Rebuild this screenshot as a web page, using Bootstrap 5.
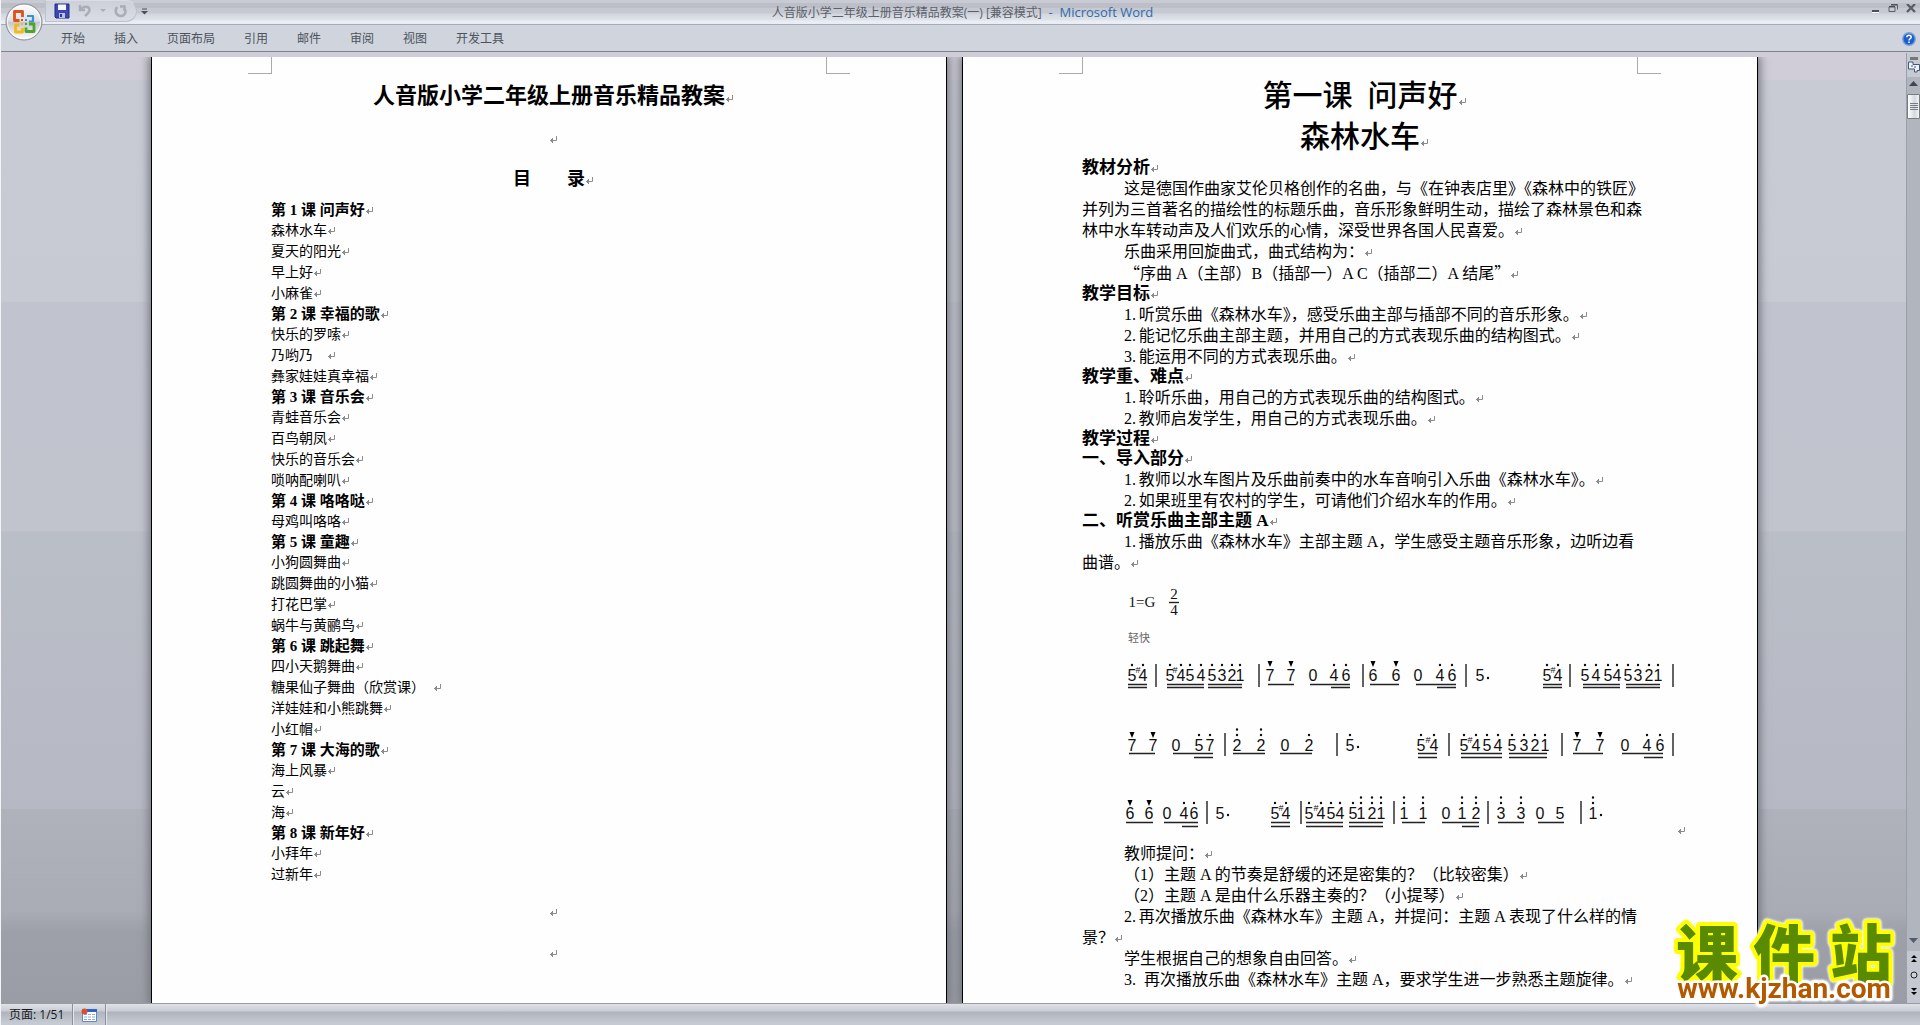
<!DOCTYPE html>
<html lang="zh-CN">
<head>
<meta charset="utf-8">
<meta name="viewport" content="width=device-width, initial-scale=1">
<title>人音版小学二年级上册音乐精品教案(一) [兼容模式] - Microsoft Word</title>
<link href="https://cdn.jsdelivr.net/npm/bootstrap@5.3.0/dist/css/bootstrap.min.css" rel="stylesheet">
<style>
  :root { --ui: "Open Sans", "Noto Sans CJK SC", sans-serif; --doc: "Liberation Serif", "Noto Sans CJK SC", serif; }
  body { font-family: var(--ui); font-size: 12px; line-height: 16px; color: #4c535c; border-left: 1px solid #f4f4f6; background: #d0cdd8; overflow-x: hidden; }
  button { border: 0; padding: 0; background: none; color: inherit; line-height: 0; }
  .titlebar { height: 24px; background: linear-gradient(#c8cbd3 0 3px, #bcbfc8 3px 8px, #c6c9d2 8px 13px, #d2d6de 14px, #e0e3e9 20px, #e9edf5 21px); }
  .quick { height: 22px; width: 92px; margin-left: 44px; background: linear-gradient(#ccd0d8, #dadde5); border: 1px solid #bfc2cb; border-top-color: #d9dce3; border-radius: 0 11px 11px 0; }
  .doc-name { font-size: 12px; color: #5b606a; }
  .app-name { font-size: 13px; color: #2f6cab; }
  .orb { position: absolute; left: 4px; top: 3px; z-index: 5; }
  .ribbon { min-height: 28px; background: #d0d4dd; border-top: 1px solid #a6aab4; border-bottom: 1px solid #7e828b; padding: 2px 0 0 60px; }
  .ribbon a { color: #4c535c; text-decoration: none; margin-right: 29px; line-height: 20px; }
  .desk { background: linear-gradient(#d0cdd8 0 28px, #c8cbd4 28px, #c7cad3 250px, #c1c4ce 250px, #c1c3cd 479px, #babec7 480px, #b6b9c3 757px, #afb2bb 757px, #a9acb5 860px, #9da0a8 880px, #9a9da5); padding: 5px 0 0 2px; }
  .sheets { gap: 15px; }
  .sheet { width: 796px; flex: none; background: #fefefe; border: solid #000; border-width: 0 1px; color: #000; font-family: var(--doc); box-shadow: 0 0 9px 2px #6f727a; clip-path: inset(0 -16px 0 -16px); }
  .crops { height: 17px; padding: 0 96px; margin-bottom: 1px; }
  .crops span { width: 24px; border-bottom: 1px solid #aaa; }
  .crops span:first-child { border-right: 1px solid #aaa; }
  .crops span:last-child { border-left: 1px solid #aaa; }
  .sheet-text { padding: 0 119px; white-space: nowrap; }
  .sheet-text p { margin: 0; line-height: 21px; }
  .sheet-text h3 { margin: 0; line-height: 20px; font-weight: 700; }
  .sheet-text .wide-line { line-height: 41px; font-size: 22px; font-weight: 700; text-align: center; margin: 0; }
  .sheet-text .contents-line { font-size: 18px; padding-top: 2px; }
  .toc p { font-size: 14px; }
  .toc h3 { font-size: 15px; }
  .lesson .wide-line { font-size: 30px; font-weight: 500; }
  .lesson .song-line { padding-bottom: 1px; }
  .lesson p, .lesson h3 { font-size: 16px; }
  .lesson h3 { font-size: 17px; }
  .lesson .ind { padding-left: 42px; }
  .cjk { font-family: "Noto Sans CJK SC", sans-serif; }
  .pm { width: 8px; height: 8px; margin: 4px -8px 0 0; fill: none; stroke: #8c8c8c; vertical-align: baseline; }
  .score { display: block; margin-left: 28px; }
  .score text { font-family: "Liberation Sans", sans-serif; font-size: 16px; text-anchor: middle; fill: #111; }
  .score .serif { font-family: "Liberation Serif", "Noto Sans CJK SC", serif; font-size: 15px; }
  .score .tempo { font-family: "Noto Sans CJK SC", sans-serif; font-size: 11px; fill: #666; }
  .score .sharp { font-size: 9px; }
  .ln { stroke: #222; stroke-width: 1.4; fill: none; }
  .dt { stroke: #111; stroke-width: 2.4; stroke-linecap: round; fill: none; }
  .scroller { width: 14px; margin-top: -4px; background: #b1b5be; border-left: 1px solid #9b9fa8; }
  .scroller .tools { background: #c6cad3; }
  .scroller button { display: block; width: 100%; text-align: center; }
  .thumb { height: 25px; background: linear-gradient(90deg, #fff, #d5d9de 60%, #f3f3f4); border: 1px solid #777b82 !important; border-radius: 1px; }
  .scroller .lower { background: #c4c8d1; }
  .statusbar { height: 22px; background: linear-gradient(#989ba4 0 1px, #e0e2e8 1px, #c9ccd5 8px, #afb3bc 9px, #c6cad3 20px); color: #16181c; }
  .statusbar > * { border-right: 1px solid #8d9098; box-shadow: 1px 0 #e3e5ea; height: 21px; margin-top: 1px; }
  .brandmark { position: absolute; right: 14px; bottom: 14px; z-index: 4; filter: drop-shadow(0 0 1px #fff) drop-shadow(0 0 1px #fff); }
  .brandmark text { text-anchor: middle; paint-order: stroke fill; stroke-linejoin: round; }
</style>
</head>
<body>
<svg width="0" height="0" class="position-absolute" aria-hidden="true">
  <symbol id="pm" viewBox="0 0 8 8"><path d="M7.5 0V4.500H1M3.500 2V7M2.500 3V6" /></symbol>
</svg>
<div class="d-flex flex-column min-vh-100 position-relative">

  <button class="orb" aria-label="Office">
    <svg width="38" height="38" viewBox="0 0 38 38">
      <defs>
        <linearGradient id="g1" x1="0" y1="0" x2="0" y2="1"><stop offset="0" stop-color="#fff"/><stop offset=".48" stop-color="#dcdfe4"/><stop offset=".5" stop-color="#c3c7ce"/><stop offset="1" stop-color="#fff"/></linearGradient>
      </defs>
      <circle cx="19" cy="19" r="18" fill="url(#g1)" stroke="#858a94"/>
      <circle cx="19" cy="19" r="16.500" fill="none" stroke="#fff" stroke-opacity=".8"/>
      <g fill="none" stroke-width="2.800" stroke-linejoin="round">
        <path d="M17.500 14V8.500H9.500V17.500H14.500" stroke="#e0501a"/>
        <path d="M22 13H28V18.500H24" stroke="#3b8fd6" stroke-width="2.200"/>
        <path d="M14.500 22H10.500V29H17.500V25" stroke="#f5b915"/>
        <path d="M24 21H29V28.500H21V24.500" stroke="#4ea52d"/>
      </g>
      <g fill="#e0501a"><rect x="16" y="16" width="2" height="2"/><rect x="20" y="16" width="2" height="2" fill="#3b8fd6"/><rect x="16" y="20" width="2" height="2" fill="#f5b915"/><rect x="20" y="20" width="2" height="2" fill="#4ea52d"/></g>
    </svg>
  </button>

  <header>
    <div class="titlebar d-flex align-items-start">
      <div class="col d-flex align-items-center">
        <div class="quick d-flex align-items-center ps-2">
          <button aria-label="保存"><svg width="16" height="16" viewBox="0 0 16 16"><path d="M1 1H15V15H2L1 14Z" fill="#3a47b5" stroke="#232d86"/><path d="M4 1.500H12V7H4Z" fill="#f4f6ff"/><path d="M5 10H11V15H5Z" fill="#b9c0e6"/><path d="M6 11H8V14H6Z" fill="#2a358f"/></svg></button>
          <button class="ms-2" aria-label="撤消"><svg width="14" height="14" viewBox="0 0 14 14" fill="none" stroke="#a9adb7" stroke-width="2.400"><path d="M2 1V6H7M2.500 5.500C5 2 11 1.500 11.500 5.500C11.800 8.500 9 10 7 12"/></svg></button>
          <button class="ms-2" aria-label="撤消列表"><svg width="6" height="4"><path d="M0 0H6L3 3Z" fill="#a9adb7"/></svg></button>
          <button class="ms-2" aria-label="重复"><svg width="14" height="14" viewBox="0 0 14 14" fill="none" stroke="#a9adb7" stroke-width="2.600"><path d="M3 3C0 8 3 12 7 12S13 7 10 4M6 2.500H10.500V7"/></svg></button>
        </div>
        <button class="ms-1" aria-label="自定义快速访问工具栏"><svg width="7" height="7"><path d="M1 1H6" stroke="#4a4f58"/><path d="M0 3H7L3.500 6.500Z" fill="#4a4f58"/></svg></button>
      </div>
      <div class="pt-1 ps-1 text-nowrap"><span class="doc-name">人音版小学二年级上册音乐精品教案(一) [兼容模式]</span><span class="app-name"> &nbsp;- &nbsp;Microsoft Word</span></div>
      <div class="col d-flex justify-content-end gap-2 pt-1">
        <button aria-label="最小化"><svg width="9" height="9"><path d="M1 7H8" stroke="#4a4f58" stroke-width="2"/><path d="M1 8.500H8" stroke="#fff"/></svg></button>
        <button aria-label="还原"><svg width="10" height="9" fill="none" stroke="#5a6069"><path d="M3 .5H9.500V5.500M1 3H7V7.500H1Z"/><path d="M1 2.500H7M3 1H9" stroke="#444951"/></svg></button>
        <button class="me-1" aria-label="关闭"><svg width="10" height="9" viewBox="0 0 10 9"><path d="M1 0L9 8M9 0L1 8" stroke="#5a6069" stroke-width="2.400"/></svg></button>
      </div>
    </div>
    <nav class="ribbon d-flex align-items-center">
      <a href="#">开始</a><a href="#">插入</a><a href="#">页面布局</a><a href="#">引用</a><a href="#">邮件</a><a href="#">审阅</a><a href="#">视图</a><a href="#">开发工具</a>
      <button class="ms-auto me-1" aria-label="帮助"><svg width="14" height="14" viewBox="0 0 14 14"><circle cx="7" cy="7" r="6.200" fill="#1d5fd0" stroke="#7aa0d4" stroke-width="1.400"/><path d="M4.800 5.200C4.800 2.600 9.200 2.600 9.200 5.200C9.200 6.800 7 6.600 7 8.500M7 9.600V11" stroke="#fff" stroke-width="1.500" fill="none"/></svg></button>
    </nav>
  </header>

  <main class="desk flex-grow-1 d-flex">
    <div class="sheets flex-grow-1 d-flex justify-content-center">
      <section class="sheet">
        <div class="crops d-flex justify-content-between"><span></span><span></span></div>
        <div class="sheet-text toc">
          <h1 class="wide-line">人音版小学二年级上册音乐精品教案<svg class="pm"><use href="#pm"/></svg></h1>
          <div class="wide-line"><svg class="pm"><use href="#pm"/></svg></div>
          <h2 class="wide-line contents-line">目　　录<svg class="pm"><use href="#pm"/></svg></h2>
          <h3>第 1 课 问声好<svg class="pm"><use href="#pm"/></svg></h3>
          <p>森林水车<svg class="pm"><use href="#pm"/></svg></p>
          <p>夏天的阳光<svg class="pm"><use href="#pm"/></svg></p>
          <p>早上好<svg class="pm"><use href="#pm"/></svg></p>
          <p>小麻雀<svg class="pm"><use href="#pm"/></svg></p>
          <h3>第 2 课 幸福的歌<svg class="pm"><use href="#pm"/></svg></h3>
          <p>快乐的罗嗦<svg class="pm"><use href="#pm"/></svg></p>
          <p>乃哟乃　<svg class="pm"><use href="#pm"/></svg></p>
          <p>彝家娃娃真幸福<svg class="pm"><use href="#pm"/></svg></p>
          <h3>第 3 课 音乐会<svg class="pm"><use href="#pm"/></svg></h3>
          <p>青蛙音乐会<svg class="pm"><use href="#pm"/></svg></p>
          <p>百鸟朝凤<svg class="pm"><use href="#pm"/></svg></p>
          <p>快乐的音乐会<svg class="pm"><use href="#pm"/></svg></p>
          <p>唢呐配喇叭<svg class="pm"><use href="#pm"/></svg></p>
          <h3>第 4 课 咯咯哒<svg class="pm"><use href="#pm"/></svg></h3>
          <p>母鸡叫咯咯<svg class="pm"><use href="#pm"/></svg></p>
          <h3>第 5 课 童趣<svg class="pm"><use href="#pm"/></svg></h3>
          <p>小狗圆舞曲<svg class="pm"><use href="#pm"/></svg></p>
          <p>跳圆舞曲的小猫<svg class="pm"><use href="#pm"/></svg></p>
          <p>打花巴掌<svg class="pm"><use href="#pm"/></svg></p>
          <p>蜗牛与黄鹂鸟<svg class="pm"><use href="#pm"/></svg></p>
          <h3>第 6 课 跳起舞<svg class="pm"><use href="#pm"/></svg></h3>
          <p>四小天鹅舞曲<svg class="pm"><use href="#pm"/></svg></p>
          <p>糖果仙子舞曲（欣赏课） <svg class="pm ms-1"><use href="#pm"/></svg></p>
          <p>洋娃娃和小熊跳舞<svg class="pm"><use href="#pm"/></svg></p>
          <p>小红帽<svg class="pm"><use href="#pm"/></svg></p>
          <h3>第 7 课 大海的歌<svg class="pm"><use href="#pm"/></svg></h3>
          <p>海上风暴<svg class="pm"><use href="#pm"/></svg></p>
          <p>云<svg class="pm"><use href="#pm"/></svg></p>
          <p>海<svg class="pm"><use href="#pm"/></svg></p>
          <h3>第 8 课 新年好<svg class="pm"><use href="#pm"/></svg></h3>
          <p>小拜年<svg class="pm"><use href="#pm"/></svg></p>
          <p class="mb-1">过新年<svg class="pm"><use href="#pm"/></svg></p>
          <div class="wide-line"><svg class="pm"><use href="#pm"/></svg></div>
          <div class="wide-line"><svg class="pm"><use href="#pm"/></svg></div>
        </div>
      </section>

      <section class="sheet">
        <div class="crops d-flex justify-content-between"><span></span><span></span></div>
        <div class="sheet-text lesson">
          <h1 class="wide-line">第一课&ensp;问声好<svg class="pm"><use href="#pm"/></svg></h1>
          <h2 class="wide-line song-line">森林水车<svg class="pm"><use href="#pm"/></svg></h2>
          <h3>教材分析<svg class="pm"><use href="#pm"/></svg></h3>
          <p class="ind">这是德国作曲家艾伦贝格创作的名曲，与《在钟表店里》《森林中的铁匠》</p>
          <p>并列为三首著名的描绘性的标题乐曲，音乐形象鲜明生动，描绘了森林景色和森</p>
          <p>林中水车转动声及人们欢乐的心情，深受世界各国人民喜爱。<svg class="pm"><use href="#pm"/></svg></p>
          <p class="ind">乐曲采用回旋曲式，曲式结构为：<svg class="pm"><use href="#pm"/></svg></p>
          <p class="ind"><span class="cjk">“</span>序曲 A（主部）B（插部一）A C（插部二）A 结尾<span class="cjk">”</span><svg class="pm"><use href="#pm"/></svg></p>
          <h3>教学目标<svg class="pm"><use href="#pm"/></svg></h3>
          <p class="ind">1.&hairsp;&hairsp;听赏乐曲《森林水车》，感受乐曲主部与插部不同的音乐形象。<svg class="pm"><use href="#pm"/></svg></p>
          <p class="ind">2.&hairsp;&hairsp;能记忆乐曲主部主题，并用自己的方式表现乐曲的结构图式。<svg class="pm"><use href="#pm"/></svg></p>
          <p class="ind">3.&hairsp;&hairsp;能运用不同的方式表现乐曲。<svg class="pm"><use href="#pm"/></svg></p>
          <h3>教学重、难点<svg class="pm"><use href="#pm"/></svg></h3>
          <p class="ind">1.&hairsp;&hairsp;聆听乐曲，用自己的方式表现乐曲的结构图式。<svg class="pm"><use href="#pm"/></svg></p>
          <p class="ind">2.&hairsp;&hairsp;教师启发学生，用自己的方式表现乐曲。<svg class="pm"><use href="#pm"/></svg></p>
          <h3>教学过程<svg class="pm"><use href="#pm"/></svg></h3>
          <h3>一、导入部分<svg class="pm"><use href="#pm"/></svg></h3>
          <p class="ind">1.&hairsp;&hairsp;教师以水车图片及乐曲前奏中的水车音响引入乐曲《森林水车》。<svg class="pm"><use href="#pm"/></svg></p>
          <p class="ind">2.&hairsp;&hairsp;如果班里有农村的学生，可请他们介绍水车的作用。<svg class="pm"><use href="#pm"/></svg></p>
          <h3>二、听赏乐曲主部主题 A<svg class="pm"><use href="#pm"/></svg></h3>
          <p class="ind">1.&hairsp;&hairsp;播放乐曲《森林水车》主部主题 A，学生感受主题音乐形象，边听边看</p>
          <p>曲谱。<svg class="pm"><use href="#pm"/></svg></p>

          <svg class="score" width="580" height="270" viewBox="0 1 580 270" role="img" aria-label="简谱">
            <text class="serif" x="32" y="35">1=G</text>
            <text class="serif" x="64" y="27">2</text><path class="ln" d="M59 30.500H69"/><text class="serif" x="64" y="43">4</text>
            <text class="tempo" x="29" y="70">轻快</text>

            <text y="109" x="22 33 60 71 80 91 102 112 122 130 160 181 203 224 236 263 286 308 330 342 370 437 448 475 486 498 507 518 528 539 548">5454545321770466604655454545321</text>
            <text class="sharp" y="101" x="28 65 443">###</text>
            <path class="ln" d="M46 92V115M149 92V115M253 92V115M356 92V115M460 92V115M563 92V115"/>
            <path class="dt" d="M22 93h0M33 93h0M60 93h0M71 93h0M80 93h0M91 93h0M102 93h0M112 93h0M122 93h0M130 93h0M224 93h0M236 93h0M330 93h0M342 93h0M437 93h0M448 93h0M475 93h0M486 93h0M498 93h0M507 93h0M518 93h0M528 93h0M539 93h0M548 93h0M378 106h0"/>
            <path d="M157.500 89h5l-2.500 6zM178.500 89h5l-2.500 6zM260.500 89h5l-2.500 6zM283.500 89h5l-2.500 6z"/>
            <path class="ln" d="M18 112.500H37M18 115.500H37M57 112.500H94M57 115.500H94M98 112.500H132M98 115.500H132M158 112.500H184M200 112.500H240M221 115.500H240M260 112.500H289M306 112.500H346M327 115.500H346M433 112.500H452M433 115.500H452M473 112.500H510M473 115.500H510M516 112.500H550M516 115.500H550"/>

            <text y="179" x="22 43 66 89 100 127 151 175 199 240 311 324 354 366 377 388 402 414 425 435 467 490 515 537 550">7705722025545454532177046</text>
            <text class="sharp" y="171" x="318 360">##</text>
            <path class="ln" d="M115 161V184M227 161V184M339 161V184M452 161V184M563 161V184"/>
            <path class="dt" d="M89 163h0M100 163h0M127 163h0M127 157.500h0M151 163h0M151 157.500h0M199 163h0M240 163h0M248 175h0M311 163h0M324 163h0M354 163h0M366 163h0M377 163h0M388 163h0M402 163h0M414 163h0M425 163h0M435 163h0M537 163h0M550 163h0"/>
            <path d="M19.500 160h5l-2.500 6zM40.500 160h5l-2.500 6zM464.500 160h5l-2.500 6zM487.500 160h5l-2.500 6z"/>
            <path class="ln" d="M19 181.500H45M63 181.500H103M84 185.500H103M123 181.500H155M170 181.500H202M308 181.500H327M308 185.500H327M351 181.500H392M351 185.500H392M399 181.500H437M399 185.500H437M463 181.500H493M512 181.500H553M534 185.500H553"/>

            <text y="247" x="20 39 57 74 84 110 165 176 199 211 221 230 243 251 262 271 294 313 336 352 366 391 411 430 450 483">66046554545451211101233051</text>
            <text class="sharp" y="239" x="171 206">##</text>
            <path class="ln" d="M97 229V252M191 229V252M284 229V252M378 229V252M471 229V252"/>
            <path class="dt" d="M74 231h0M84 231h0M118 243h0M165 231h0M176 231h0M199 231h0M211 231h0M221 231h0M230 231h0M243 231h0M251 231h0M251 225.500h0M262 231h0M262 225.500h0M271 231h0M271 225.500h0M294 231h0M294 225.500h0M313 231h0M313 225.500h0M352 231h0M352 225.500h0M366 231h0M366 225.500h0M391 231h0M391 225.500h0M411 231h0M411 225.500h0M483 231h0M483 225.500h0M491 243h0"/>
            <path d="M17.500 228h5l-2.500 6zM36.500 228h5l-2.500 6z"/>
            <path class="ln" d="M16 250.500H43M54 250.500H88M72 254.500H88M161 250.500H180M161 254.500H180M196 250.500H233M196 254.500H233M239 250.500H273M239 254.500H273M292 250.500H315M332 250.500H369M352 254.500H369M388 250.500H414M428 250.500H454"/>
            <use href="#pm" x="567" y="255" width="8" height="8" fill="none" stroke="#8c8c8c"/>
          </svg>

          <p class="ind">教师提问：<svg class="pm"><use href="#pm"/></svg></p>
          <p class="ind">（1）主题 A 的节奏是舒缓的还是密集的？（比较密集）<svg class="pm"><use href="#pm"/></svg></p>
          <p class="ind">（2）主题 A 是由什么乐器主奏的？（小提琴）<svg class="pm"><use href="#pm"/></svg></p>
          <p class="ind">2.&hairsp;&hairsp;再次播放乐曲《森林水车》主题 A，并提问：主题 A 表现了什么样的情</p>
          <p>景？<svg class="pm"><use href="#pm"/></svg></p>
          <p class="ind">学生根据自己的想象自由回答。<svg class="pm"><use href="#pm"/></svg></p>
          <p class="ind">3.&ensp;再次播放乐曲《森林水车》主题 A，要求学生进一步熟悉主题旋律。<svg class="pm"><use href="#pm"/></svg></p>
        </div>
      </section>
    </div>

    <aside class="scroller d-flex flex-column">
      <div class="tools">
        <button aria-label="拆分" class="pt-1"><svg width="8" height="4"><path d="M0 0H8V3H0Z" fill="#77777a"/></svg></button>
        <button aria-label="标尺" class="pb-1"><svg width="12" height="12" viewBox="0 0 12 12"><path d="M.5 1H5V3.500H11.500V9.500H9V11H6.500V8H.5Z" fill="#eef2fa" stroke="#41577a"/><path d="M3 5H5M6 6H8" stroke="#41577a"/></svg></button>
      </div>
      <button aria-label="向上滚动" class="pt-1 pb-2"><svg width="9" height="5"><path d="M4.500 0L9 5H0Z" fill="#3f4650"/></svg></button>
      <button class="thumb" aria-label="滚动块"><svg width="8" height="9"><path d="M0 1.500H8M0 3.500H8M0 5.500H8M0 7.500H8" stroke="#777b82"/></svg></button>
      <div class="mt-auto">
        <button aria-label="向下滚动" class="pt-1 pb-2"><svg width="9" height="5"><path d="M0 0H9L4.500 5Z" fill="#525c6c"/></svg></button>
        <div class="lower pb-1">
          <button aria-label="前一页" class="py-1"><svg width="8" height="8"><path d="M4 0L7 3H1ZM4 4L7 7H1Z"/></svg></button>
          <button aria-label="选择浏览对象" class="py-1"><svg width="8" height="8"><circle cx="4" cy="4" r="3" fill="#cfd2d8" stroke="#222"/></svg></button>
          <button aria-label="下一页" class="py-1"><svg width="8" height="8"><path d="M4 4L7 1H1ZM4 8L7 5H1Z"/></svg></button>
        </div>
      </div>
    </aside>
  </main>

  <footer class="statusbar d-flex">
    <div class="d-flex align-items-center ps-2 pe-2">页面: 1/51</div>
    <button class="px-1" aria-label="宏"><svg class="mx-1" width="16" height="14" viewBox="0 0 16 14"><path d="M1.500 1.500H15.500V13.500H1.500Z" fill="#fff" stroke="#5e86c9"/><path d="M1 1H16V4H1Z" fill="#2f62c4"/><path d="M3 6.500H14M3 9H14M3 11.500H14" stroke="#8fabd9" stroke-dasharray="3 1"/><circle cx="3.500" cy="3.500" r="3" fill="#d9502f"/></svg></button>
  </footer>

  <svg class="brandmark" width="240" height="92" viewBox="0 0 240 92" role="img" aria-label="课件站 www.kjzhan.com">
    <text x="41 118 195" y="58" font-family="Noto Sans CJK SC, sans-serif" font-size="62" font-weight="900" fill="#5a8a00" stroke="#ff0" stroke-width="8">课件站</text>
    <text x="118" y="79" font-family="Roboto, sans-serif" font-size="28" font-weight="700" fill="#b35a00" stroke="#fff" stroke-width="5">www.kjzhan.com</text>
  </svg>
</div>
<script src="https://cdn.jsdelivr.net/npm/bootstrap@5.3.0/dist/js/bootstrap.bundle.min.js"></script>
</body>
</html>
